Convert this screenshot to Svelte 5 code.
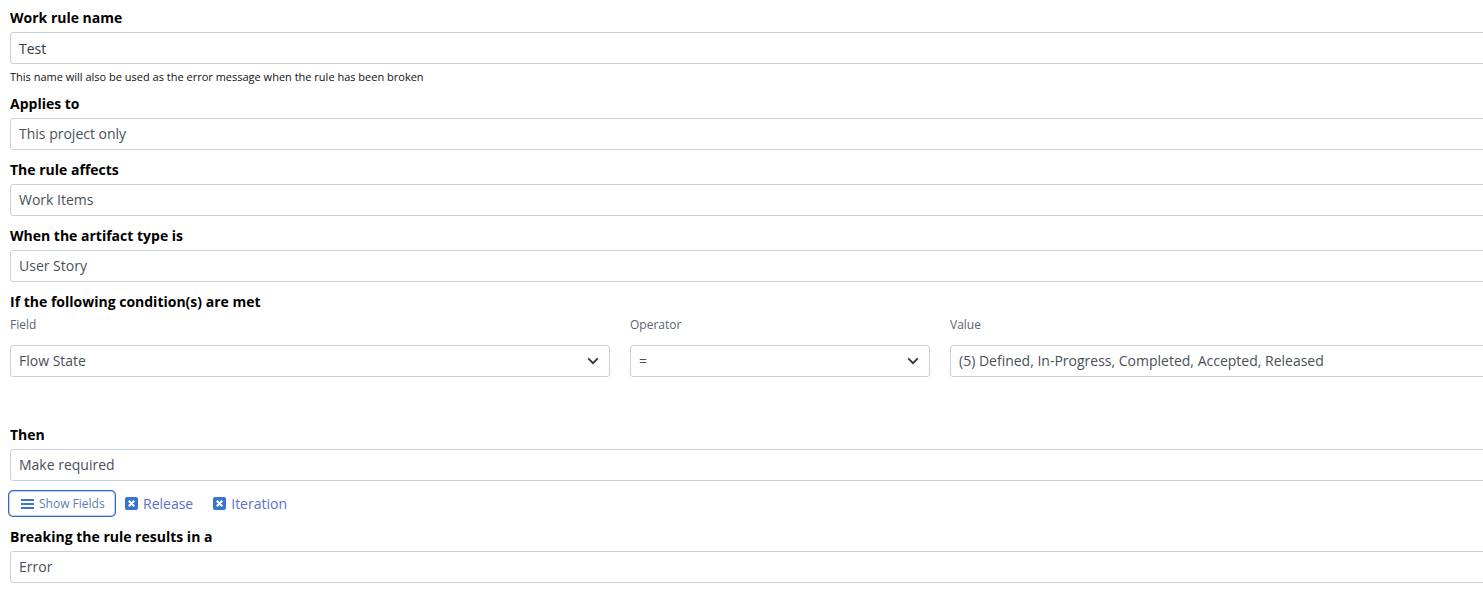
<script>
  const conditions = [
    { label: 'Field', value: 'Flow State', kind: 'field' },
    { label: 'Operator', value: '=', kind: 'operator' },
    { label: 'Value', value: '(5) Defined, In-Progress, Completed, Accepted, Released', kind: 'value' }
  ];
  const tags = ['Release', 'Iteration'];
</script>

<div class="page">
  <form class="rule-form">
    <div class="group first">
      <div class="label">Work rule name</div>
      <div class="input dark">Test</div>
      <div class="hint">This name will also be used as the error message when the rule has been broken</div>
    </div>

    <div class="group">
      <div class="label">Applies to</div>
      <div class="input">This project only</div>
    </div>

    <div class="group">
      <div class="label">The rule affects</div>
      <div class="input">Work Items</div>
    </div>

    <div class="group">
      <div class="label">When the artifact type is</div>
      <div class="input">User Story</div>
    </div>

    <div class="group conditions">
      <div class="label">If the following condition(s) are met</div>
      <div class="condition-row">
        {#each conditions as c}
          <div class="col {c.kind}">
            <div class="sublabel">{c.label}</div>
            <div class="input">
              <span>{c.value}</span>
              {#if c.kind !== 'value'}
                <svg class="chevron" width="12" height="8" viewBox="0 0 12 8" aria-hidden="true">
                  <path d="M1.2 1.4 6 6.2l4.8-4.8" fill="none" stroke="#343a40" stroke-width="1.9" />
                </svg>
              {/if}
            </div>
          </div>
        {/each}
      </div>
    </div>

    <div class="group">
      <div class="label">Then</div>
      <div class="input">Make required</div>
      <div class="fields-row">
        <button type="button" class="show-fields">
          <svg width="14" height="12" viewBox="0 0 14 12" aria-hidden="true">
            <path d="M1 1h13v2H1zM1 5h13v2H1zM1 9h13v2H1z" fill="#3a74d0" />
          </svg>
          Show Fields
        </button>
        {#each tags as tag}
          <span class="tag">
            <svg width="13" height="13" viewBox="0 0 13 13" aria-hidden="true">
              <rect width="13" height="13" rx="2" fill="#3a74d0" />
              <path d="M3.8 3.8l5.4 5.4M9.2 3.8 3.8 9.2" stroke="#fff" stroke-width="2.2" />
            </svg>
            {tag}
          </span>
        {/each}
      </div>
    </div>

    <div class="group">
      <div class="label">Breaking the rule results in a</div>
      <div class="input">Error</div>
    </div>
  </form>
</div>

<style>
  :global(body) {
    margin: 0;
    background: #fff;
    overflow: hidden;
  }

  .page {
    height: 603px;
    overflow: hidden;
    font-family: "Open Sans", sans-serif;
    font-size: 14px;
    color: #495057;
  }

  .rule-form {
    width: 1600px;
    padding: 7px 0 0 10px;
    box-sizing: border-box;
  }

  .group {
    margin-bottom: 9px;
  }

  .group.first {
    margin-bottom: 8px;
  }

  .label {
    font-size: 14px;
    font-weight: 700;
    line-height: 21px;
    margin-bottom: 4px;
    color: #000;
  }

  .input {
    display: flex;
    align-items: center;
    justify-content: space-between;
    height: 32px;
    box-sizing: border-box;
    padding: 0 10px 0 8px;
    border: 1px solid #c5d0e0;
    border-radius: 3px;
    background: #fff;
    line-height: 20px;
  }

  .dark {
    padding-top: 2px;
    color: #343a40;
  }

  .hint {
    font-size: 11px;
    line-height: 16px;
    margin-top: 5px;
    color: #111;
  }

  .condition-row {
    display: flex;
    gap: 20px;
  }

  .sublabel {
    font-size: 12px;
    line-height: 18px;
    margin-bottom: 11px;
    color: #5a6472;
  }

  .col.field {
    width: 600px;
  }

  .col.operator {
    width: 300px;
  }

  .col.value {
    flex: 1;
  }

  .conditions {
    margin-bottom: 47px;
  }

  .fields-row {
    display: flex;
    align-items: center;
    margin-top: 9px;
    height: 27px;
  }

  .show-fields {
    display: flex;
    align-items: center;
    gap: 5px;
    width: 106px;
    height: 25px;
    margin-left: -1px;
    padding: 0 0 0 10px;
    box-sizing: border-box;
    border: 1px solid #bcd0ea;
    border-radius: 4px;
    background: #fff;
    box-shadow: 0 0 0 1px #2f6ac0;
    font-family: inherit;
    font-size: 12px;
    color: #5b7fb5;
  }

  .tag {
    display: flex;
    align-items: center;
    gap: 5px;
    margin-left: 10px;
    color: #5a6fd0;
  }

  .tag + .tag {
    margin-left: 20px;
  }

  .chevron {
    flex: none;
  }
</style>
